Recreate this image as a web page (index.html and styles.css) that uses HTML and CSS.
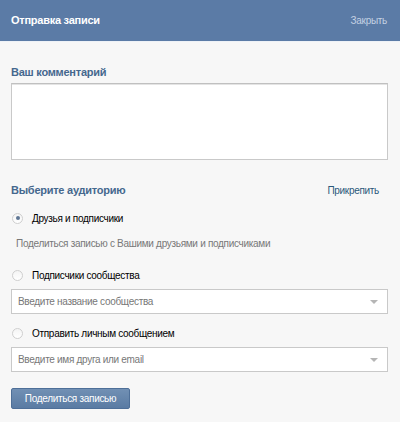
FILE: index.html
```html
<!DOCTYPE html>
<html>
<head>
<meta charset="utf-8">
<link rel="stylesheet" href="styles.css">
</head>
<body>
<div class="box">
  <div class="head">
    <div class="head-title">Отправка записи</div>
    <div class="head-close">Закрыть</div>
  </div>
  <div class="body">
    <div class="label">Ваш комментарий</div>
    <div class="textarea"></div>
    <div class="row-between">
      <div class="label">Выберите аудиторию</div>
      <div class="link">Прикрепить</div>
    </div>
    <div class="radio-row checked"><span class="radio"></span><span>Друзья и подписчики</span></div>
    <div class="desc">Поделиться записью с Вашими друзьями и подписчиками</div>
    <div class="radio-row"><span class="radio"></span><span>Подписчики сообщества</span></div>
    <div class="select"><span>Введите название сообщества</span><span class="arrow"></span></div>
    <div class="radio-row"><span class="radio"></span><span>Отправить личным сообщением</span></div>
    <div class="select"><span>Введите имя друга или email</span><span class="arrow"></span></div>
    <div class="button">Поделиться записью</div>
  </div>
</div>
</body>
</html>
```

FILE: styles.css
```css
html, body {
  margin: 0;
  padding: 0;
  background: #f7f7f7;
  font-family: "Liberation Sans", Arial, sans-serif;
  font-size: 10px;
  letter-spacing: -0.3px;
}
.box {
  width: 400px;
  height: 422px;
  background: #f7f7f7;
}
.head {
  background: #5b7ba6;
  border-bottom: 1px solid #eef2f7;
  display: flex;
  align-items: center;
  justify-content: space-between;
  padding: 0 13px 0 11px;
  box-sizing: border-box;
  height: 42px;
}
.head-title {
  color: #fff;
  font-weight: bold;
  font-size: 11px;
  letter-spacing: -0.25px;
  margin-top: -1px;
}
.head-close {
  color: #c3d1e3;
}
.body {
  padding: 23px 12px 0 11px;
}
.label {
  color: #45688e;
  font-weight: bold;
  font-size: 11px;
  letter-spacing: -0.25px;
  line-height: 14px;
}
.textarea {
  margin-top: 4px;
  height: 75px;
  background: #fff;
  border: 1px solid #c9c9c9;
  border-top-color: #c0c0c0;
  box-shadow: inset 0 1px 0 #e4e4e4;
}
.row-between {
  display: flex;
  justify-content: space-between;
  align-items: center;
  margin-top: 23px;
  height: 14px;
}
.link {
  color: #2b587a;
  margin-right: 9px;
}
.radio-row {
  display: flex;
  align-items: center;
  gap: 9px;
  margin-top: 14px;
  height: 14px;
  color: #000;
  padding-left: 1px;
}
.radio {
  width: 11px;
  height: 11px;
  border-radius: 50%;
  background: linear-gradient(#f4f4f4, #fff);
  border: 1px solid #cfcfcf;
  box-sizing: border-box;
  position: relative;
}
.checked .radio::after {
  content: "";
  position: absolute;
  left: 2.5px;
  top: 2.5px;
  width: 4px;
  height: 4px;
  border-radius: 50%;
  background: #5f7694;
}
.desc {
  color: #777;
  margin-top: 12px;
  padding-left: 5px;
  line-height: 14px;
  height: 14px;
}
.desc + .radio-row { margin-top: 17px; }
.select {
  height: 25px;
  background: #fff;
  border: 1px solid #c9c9c9;
  box-sizing: border-box;
  display: flex;
  align-items: center;
  justify-content: space-between;
  padding: 0 9px 0 6px;
  color: #777;
  white-space: nowrap;
}
.radio-row + .select { margin-top: 7px; }
.select + .radio-row { margin-top: 12px; }
.arrow {
  width: 0;
  height: 0;
  border-left: 4px solid transparent;
  border-right: 4px solid transparent;
  border-top: 4px solid #b5b5b5;
}
.button {
  margin-top: 16px;
  width: 119px;
  height: 21px;
  box-sizing: border-box;
  background: linear-gradient(#7190b4, #5a7ba3);
  border: 1px solid #4e6f98;
  border-radius: 2px;
  color: #fff;
  display: flex;
  align-items: center;
  justify-content: center;
  white-space: nowrap;
}
```
